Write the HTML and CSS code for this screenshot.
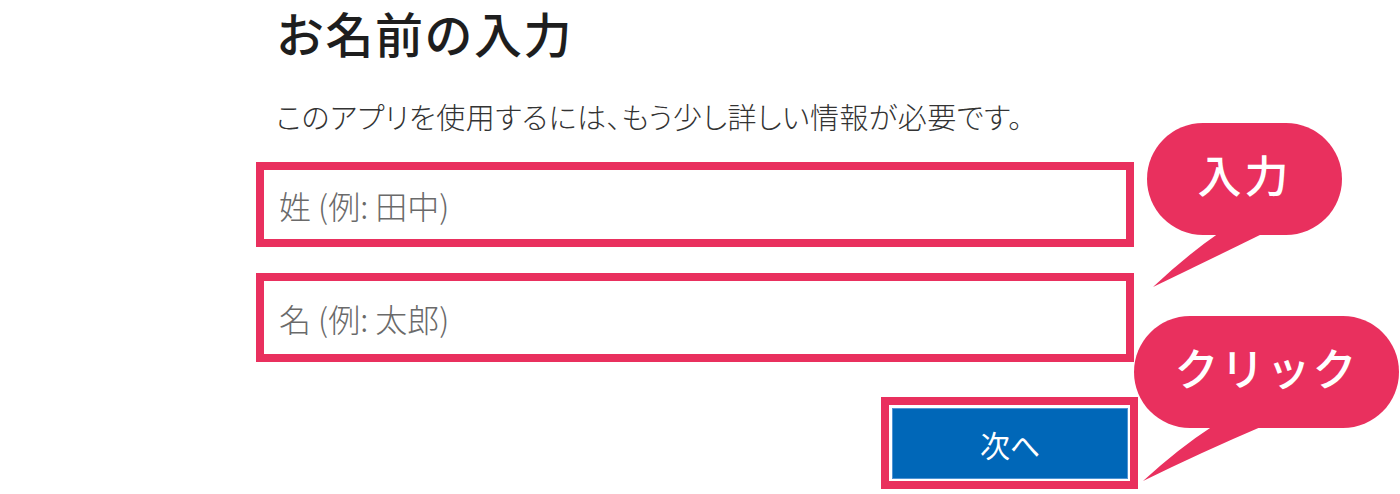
FILE: index.html
```html
<!DOCTYPE html>
<html lang="ja">
<head>
    <meta charset="UTF-8">
    <title>お名前の入力</title>
    <link rel="stylesheet" href="styles.css">
</head>
<body>
    <div class="pagina">
        <div class="formulario">
            <h1 class="titulo">お名前の入力</h1>
            <p class="descricao">このアプリを使用するには、もう少し詳しい情報が必要です。</p>

            <div class="destaque campo-sobrenome">
                <input class="campo" type="text" placeholder="姓 (例: 田中)">
            </div>
            <div class="destaque campo-nome">
                <input class="campo" type="text" placeholder="名 (例: 太郎)">
            </div>

            <div class="acoes">
                <div class="destaque destaque-botao">
                    <button class="botao-proximo">次へ</button>
                </div>
            </div>
        </div>

        <!-- balões de anotação -->
        <div class="balao balao-entrada">
            <span>入力</span>
            <svg class="rabo" width="130" height="60" viewBox="0 0 130 60">
                <path d="M72 0 Q40 22 6 54 Q60 28 117 0 Z"/>
            </svg>
        </div>
        <div class="balao balao-clique">
            <span>クリック</span>
            <svg class="rabo" width="140" height="60" viewBox="0 0 140 60">
                <path d="M79 0 Q45 22 9 55 Q68 26 129 0 Z"/>
            </svg>
        </div>
    </div>
</body>
</html>
```

FILE: styles.css
```css
* {
    box-sizing: border-box;
    margin: 0;
    padding: 0;
}

body {
    background-color: white;
    font-family: "Noto Sans CJK JP", "Noto Sans", sans-serif;
    width: 1400px;
    height: 494px;
    overflow: hidden;
}

.pagina {
    position: relative;
    height: 494px;
    padding: 5px 0 0 256px;
}

.formulario {
    width: 882px;
    display: flex;
    flex-direction: column;
}

.titulo {
    color: #1e1e1e;
    font-size: 48px;
    font-weight: 500;
    line-height: 54px;
    letter-spacing: 1.5px;
    padding-left: 20px;
}

.descricao {
    color: #333;
    font-size: 29px;
    font-weight: 300;
    line-height: 40px;
    letter-spacing: 0.5px;
    padding-left: 20px;
    margin-top: 37px;
    font-feature-settings: "palt";
    white-space: nowrap;
}

.destaque {
    border: 8px solid #e9305e;
    background-color: white;
}

.campo-sobrenome {
    width: 878px;
    height: 85px;
    margin-top: 26px;
}

.campo-nome {
    width: 878px;
    height: 89px;
    margin-top: 26px;
}

.campo {
    width: 100%;
    height: 100%;
    border: none;
    outline: none;
    background: transparent;
    padding: 0 15px;
    font-family: inherit;
    font-size: 32px;
    font-weight: 300;
    color: #333;
}

.campo::placeholder {
    color: #6a6a6a;
}

.acoes {
    display: flex;
    justify-content: flex-end;
    margin-top: 35px;
}

.destaque-botao {
    width: 257px;
    height: 92px;
    padding: 3px 2px 2px 3px;
}

.botao-proximo {
    width: 100%;
    height: 100%;
    background-color: #0067b8;
    border: 1px solid #4f94d4;
    color: white;
    font-family: inherit;
    font-size: 30px;
    font-weight: 400;
    cursor: pointer;
}

.balao {
    position: absolute;
    height: 112px;
    border-radius: 56px;
    background-color: #e9305e;
    color: white;
    display: flex;
    justify-content: center;
    align-items: center;
    padding-bottom: 10px;
    font-size: 44px;
    font-weight: 500;
}

.balao span {
    position: relative;
    z-index: 2;
}

.balao .rabo {
    position: absolute;
    top: 110px;
    fill: #e9305e;
}

.balao-entrada {
    left: 1147px;
    top: 123px;
    width: 195px;
    letter-spacing: 3px;
}

.balao-entrada .rabo {
    left: 0;
}

.balao-clique {
    left: 1134px;
    top: 316px;
    width: 265px;
    letter-spacing: 2px;
}

.balao-clique .rabo {
    left: 0;
}
```
